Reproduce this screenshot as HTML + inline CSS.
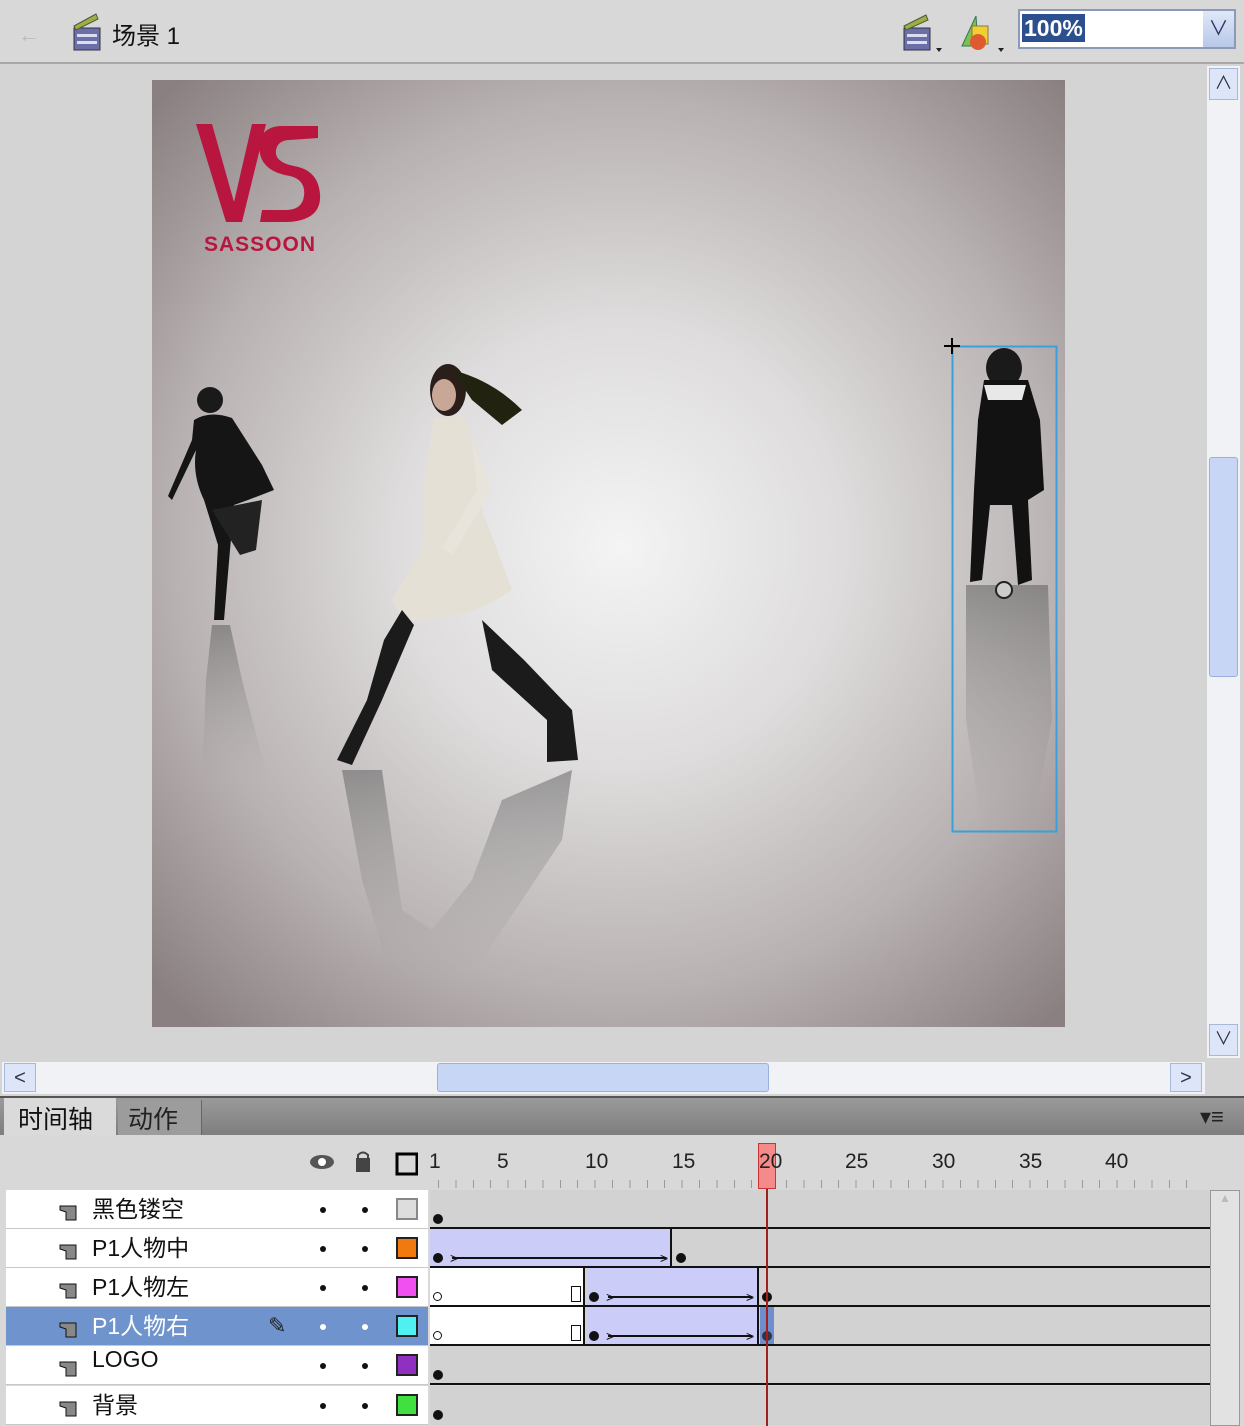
<!DOCTYPE html>
<html><head><meta charset="utf-8"><style>
*{margin:0;padding:0;box-sizing:border-box}
body{width:1244px;height:1426px;overflow:hidden;background:#d4d4d4;font-family:"Liberation Sans","Noto Sans CJK SC",sans-serif;position:relative}
.abs{position:absolute}
.row{position:absolute;left:6px;width:422px;height:39px;background:#fff;border-bottom:1px solid #c8c8c8}
.row .nm{position:absolute;left:86px;top:0px;font-size:23px;color:#111}
.row .ic{position:absolute;left:52px;top:12px;width:20px;height:20px}
.row .d1,.row .d2{position:absolute;top:17px;width:6px;height:6px;border-radius:50%;background:#111}
.row .d1{left:314px}.row .d2{left:356px}
.row .sw{position:absolute;left:390px;top:8px;width:22px;height:22px;border:2px solid #222}
.tl{position:absolute;left:430px;width:780px;height:39px;border-bottom:2px solid #111;background:#d2d2d2}
.kf{position:absolute;width:10px;height:10px;border-radius:50%;background:#111}
.ar{position:absolute;top:23px;font-size:14px;line-height:12px;color:#111}
</style></head><body>
<div class="abs" style="left:0;top:0;width:1244px;height:64px;background:#d8d8d8;border-bottom:2px solid #a8a8a8"></div>
<div class="abs" style="left:18px;top:22px;color:#bbb;font-size:22px">&#x2190;</div>
<svg class="abs" style="left:70px;top:12px" width="36" height="40"><rect x="4" y="16" width="26" height="22" fill="#6a6fa8" stroke="#334" /><rect x="7" y="22" width="20" height="3" fill="#dde"/><rect x="7" y="29" width="20" height="3" fill="#dde"/><path d="M4 14 L26 2 L28 7 L6 18Z" fill="#9ab040" stroke="#554"/></svg>
<div class="abs" style="left:112px;top:16px;font-size:24px;color:#111">场景 1</div>
<svg class="abs" style="left:900px;top:14px" width="48" height="40"><rect x="4" y="14" width="26" height="22" fill="#6a6fa8" stroke="#334"/><rect x="7" y="20" width="20" height="3" fill="#dde"/><rect x="7" y="27" width="20" height="3" fill="#dde"/><path d="M4 12 L26 1 L28 6 L6 16Z" fill="#9ab040" stroke="#554"/><path d="M36 34 L42 34 L39 38Z" fill="#222"/></svg>
<svg class="abs" style="left:958px;top:12px" width="50" height="42"><path d="M4 34 L18 4 L20 34Z" fill="#7ec050" stroke="#375"/><rect x="14" y="14" width="16" height="18" fill="#f0d030" stroke="#874"/><circle cx="20" cy="30" r="8" fill="#e05a30"/><path d="M40 36 L46 36 L43 40Z" fill="#222"/></svg>
<div class="abs" style="left:1018px;top:9px;width:218px;height:40px;background:#fff;border:2px solid #8a9ab8"></div>
<div class="abs" style="left:1022px;top:14px;height:28px;padding:0 2px;background:#2b4f8f;color:#fff;font-size:23px;font-weight:bold;line-height:28px">100%</div>
<div class="abs" style="left:1203px;top:11px;width:31px;height:36px;background:linear-gradient(#dfe8f8,#b8c8e8);color:#336;text-align:center;font-size:20px;line-height:36px">&#x2228;</div>
<div class="abs" style="left:152px;top:80px;width:913px;height:947px;background:radial-gradient(ellipse 640px 640px at 468px 465px,#f4f4f4 0%,#dedcdc 35%,#b8b1b1 70%,#8a8081 100%)"></div>
<svg class="abs" style="left:190px;top:118px" width="140" height="140">
<path d="M6 6 L22 6 L44 84 L62 6 L76 6 L52 104 L36 104Z" fill="#b8163f"/>
<path d="M128 8 L90 8 Q66 10 70 36 Q74 54 100 58 Q116 62 114 78 Q112 92 96 92 L72 92 L70 104 L98 104 Q132 102 130 76 Q128 52 104 48 Q84 44 86 32 Q88 22 100 22 L128 20Z" fill="#b8163f"/>
<text x="14" y="133" font-family="Liberation Sans" font-weight="bold" font-size="21" fill="#b8163f" letter-spacing="1">SASSOON</text>
</svg>
<svg class="abs" style="left:152px;top:80px" width="913" height="980">
<defs><linearGradient id="rf" x1="0" y1="0" x2="0" y2="1"><stop offset="0" stop-color="#555" stop-opacity=".5"/><stop offset="1" stop-color="#999" stop-opacity="0"/></linearGradient></defs>
<circle cx="58" cy="320" r="13" fill="#1a1a1a"/>
<path d="M42 340 Q58 330 80 338 L110 385 L122 410 L96 420 L82 425 L78 470 L72 540 L62 540 L66 465 L52 420 Q40 395 44 370 L20 420 L16 416 L40 360Z" fill="#151515"/>
<path d="M60 430 L110 420 L104 470 L88 475Z" fill="#222"/>
<path d="M60 545 L78 545 L90 600 L116 700 L50 700 L54 600Z" fill="url(#rf)"/>
<ellipse cx="296" cy="310" rx="18" ry="26" fill="#2a1e1a"/>
<path d="M300 290 Q340 300 370 330 L350 345 L320 320Z" fill="#221"/>
<ellipse cx="292" cy="315" rx="12" ry="16" fill="#c9a797"/>
<path d="M282 338 L312 336 L325 370 L330 430 L360 510 Q310 545 250 540 L240 520 L270 470 L272 400Z" fill="#e4e0d6"/>
<path d="M320 360 L340 410 L300 475 L290 468 L325 410Z" fill="#e8e4dc"/>
<path d="M250 530 L232 560 L215 620 L185 680 L200 685 L230 620 L262 545Z" fill="#1b1b1b"/>
<path d="M330 540 L372 580 L420 630 L426 680 L395 682 L395 640 L340 590Z" fill="#1b1b1b"/>
<path d="M190 690 L230 690 L250 830 L280 850 L320 800 L350 720 L420 690 L410 760 L330 880 L290 900 L240 900 L210 800Z" fill="url(#rf)"/>
<ellipse cx="852" cy="288" rx="18" ry="20" fill="#1a1a1a"/>
<path d="M832 300 L876 300 L888 340 L892 410 L876 420 L880 500 L866 505 L860 425 L838 425 L830 500 L818 502 L822 410 L826 340Z" fill="#121212"/>
<path d="M832 305 L874 305 L870 320 L836 320Z" fill="#e8e8e8"/>
<path d="M814 505 L896 505 L900 640 L880 750 L830 750 L814 640Z" fill="url(#rf)"/>
<rect x="800.5" y="266.5" width="104" height="485" fill="none" stroke="#3aa0dd" stroke-width="2"/>
<path d="M800 258 V274 M792 266 H808" stroke="#000" stroke-width="2"/>
<circle cx="852" cy="510" r="8" fill="#ccc" stroke="#222" stroke-width="2"/>
</svg>
<div class="abs" style="left:1207px;top:66px;width:33px;height:992px;background:#f0f2f6"></div>
<div class="abs" style="left:1209px;top:68px;width:29px;height:32px;background:#dce6f8;border:1px solid #a8b8d8;color:#334;text-align:center;font-size:18px">&#x2227;</div>
<div class="abs" style="left:1209px;top:457px;width:29px;height:220px;background:#c6d6f4;border:1px solid #9cb0dc;border-radius:3px"></div>
<div class="abs" style="left:1209px;top:1024px;width:29px;height:32px;background:#dce6f8;border:1px solid #a8b8d8;color:#334;text-align:center;font-size:18px">&#x2228;</div>
<div class="abs" style="left:2px;top:1062px;width:1203px;height:32px;background:#f0f2f6"></div>
<div class="abs" style="left:4px;top:1063px;width:32px;height:29px;background:#dce6f8;border:1px solid #a8b8d8;color:#334;text-align:center;font-size:20px;line-height:28px">&lt;</div>
<div class="abs" style="left:437px;top:1063px;width:332px;height:29px;background:#c6d6f4;border:1px solid #9cb0dc;border-radius:3px"></div>
<div class="abs" style="left:1170px;top:1063px;width:32px;height:29px;background:#dce6f8;border:1px solid #a8b8d8;color:#334;text-align:center;font-size:20px;line-height:28px">&gt;</div>
<div class="abs" style="left:0;top:1096px;width:1244px;height:330px;background:#d8d8d8;border-top:2px solid #555"></div>
<div class="abs" style="left:0;top:1098px;width:1244px;height:37px;background:linear-gradient(#9a9a9a,#7e7e7e)"></div>
<div class="abs" style="left:4px;top:1098px;width:112px;height:37px;background:#dadada;font-size:25px;padding:2px 0 0 14px;color:#111">时间轴</div>
<div class="abs" style="left:118px;top:1100px;width:84px;height:35px;background:#9c9c9c;font-size:25px;padding:0 0 0 10px;color:#222;border-right:1px solid #666">动作</div>
<div class="abs" style="left:1200px;top:1104px;font-size:22px;color:#222">&#x25BE;&#x2261;</div>
<svg class="abs" style="left:308px;top:1150px" width="110" height="28"><ellipse cx="14" cy="12" rx="12" ry="7" fill="#555"/><circle cx="14" cy="12" r="4" fill="#fff"/><rect x="48" y="8" width="14" height="14" fill="#444"/><path d="M50 9 V5 Q55 0 60 5 V9" fill="none" stroke="#444" stroke-width="2"/><rect x="89" y="4" width="20" height="20" fill="none" stroke="#000" stroke-width="3"/></svg>
<div class="abs" style="left:0;top:1150px;font-size:21px;color:#222;width:1244px">
<span class="abs" style="left:429px">1</span><span class="abs" style="left:497px">5</span><span class="abs" style="left:585px">10</span><span class="abs" style="left:672px">15</span><span class="abs" style="left:845px">25</span><span class="abs" style="left:932px">30</span><span class="abs" style="left:1019px">35</span><span class="abs" style="left:1105px">40</span></div>
<div class="abs" style="left:430px;top:1180px;width:770px;height:8px;background:repeating-linear-gradient(90deg,transparent 0 8px,#999 8px 9px,transparent 9px 17.4px)"></div>
<div class="row" style="top:1190px"><svg class="ic" viewBox="0 0 20 20"><path d="M2 4 L18 4 L18 18 L8 18 L8 10 L2 8Z" fill="#888" stroke="#111"/></svg><span class="nm">黑色镂空</span><i class="d1"></i><i class="d2"></i><i class="sw" style="background:#ddd;border-color:#888"></i></div>
<div class="row" style="top:1229px"><svg class="ic" viewBox="0 0 20 20"><path d="M2 4 L18 4 L18 18 L8 18 L8 10 L2 8Z" fill="#888" stroke="#111"/></svg><span class="nm">P1人物中</span><i class="d1"></i><i class="d2"></i><i class="sw" style="background:#f07a10"></i></div>
<div class="row" style="top:1268px"><svg class="ic" viewBox="0 0 20 20"><path d="M2 4 L18 4 L18 18 L8 18 L8 10 L2 8Z" fill="#888" stroke="#111"/></svg><span class="nm">P1人物左</span><i class="d1"></i><i class="d2"></i><i class="sw" style="background:#f050f0"></i></div>
<div class="row" style="top:1307px;background:#6f93cc"><svg class="ic" viewBox="0 0 20 20"><path d="M2 4 L18 4 L18 18 L8 18 L8 10 L2 8Z" fill="#888" stroke="#111"/></svg><span class="nm" style="color:#fff">P1人物右</span><span class="abs" style="left:262px;top:6px;font-size:22px;color:#222">&#x270E;</span><i class="d1" style="background:#fff"></i><i class="d2" style="background:#fff"></i><i class="sw" style="background:#50f0f0"></i></div>
<div class="row" style="top:1346px"><svg class="ic" viewBox="0 0 20 20"><path d="M2 4 L18 4 L18 18 L8 18 L8 10 L2 8Z" fill="#888" stroke="#111"/></svg><span class="nm">LOGO</span><i class="d1"></i><i class="d2"></i><i class="sw" style="background:#9030c0"></i></div>
<div class="row" style="top:1386px"><svg class="ic" viewBox="0 0 20 20"><path d="M2 4 L18 4 L18 18 L8 18 L8 10 L2 8Z" fill="#888" stroke="#111"/></svg><span class="nm">背景</span><i class="d1"></i><i class="d2"></i><i class="sw" style="background:#40e040"></i></div>
<div class="tl" style="top:1190px"><i class="kf" style="left:3px;top:24px"></i></div>
<div class="tl" style="top:1229px"><div class="abs" style="left:0;top:0;width:242px;height:37px;background:#ccccf8;border-right:2px solid #111"></div><i class="kf" style="left:3px;top:24px"></i><span class="ar" style="left:20px">&gt;</span><div class="abs" style="left:22px;top:28px;width:214px;height:2px;background:#111"></div><span class="ar" style="left:230px">&gt;</span><i class="kf" style="left:246px;top:24px"></i></div>
<div class="tl" style="top:1268px"><div class="abs" style="left:0;top:0;width:155px;height:37px;background:#fff;border-right:2px solid #111"></div><div class="abs" style="left:157px;top:0;width:172px;height:37px;background:#ccccf8;border-right:2px solid #111"></div><i class="abs" style="left:3px;top:24px;width:9px;height:9px;border:1.5px solid #111;border-radius:50%"></i><i class="abs" style="left:141px;top:18px;width:10px;height:16px;border:1.5px solid #111"></i><i class="kf" style="left:159px;top:24px"></i><span class="ar" style="left:176px">&gt;</span><div class="abs" style="left:178px;top:28px;width:144px;height:2px;background:#111"></div><span class="ar" style="left:316px">&gt;</span><i class="kf" style="left:332px;top:24px"></i></div>
<div class="tl" style="top:1307px"><div class="abs" style="left:0;top:0;width:155px;height:37px;background:#fff;border-right:2px solid #111"></div><div class="abs" style="left:157px;top:0;width:172px;height:37px;background:#ccccf8;border-right:2px solid #111"></div><div class="abs" style="left:330px;top:0;width:14px;height:37px;background:#6f8fcc"></div><i class="abs" style="left:3px;top:24px;width:9px;height:9px;border:1.5px solid #111;border-radius:50%"></i><i class="abs" style="left:141px;top:18px;width:10px;height:16px;border:1.5px solid #111"></i><i class="kf" style="left:159px;top:24px"></i><span class="ar" style="left:176px">&gt;</span><div class="abs" style="left:178px;top:28px;width:144px;height:2px;background:#111"></div><span class="ar" style="left:316px">&gt;</span><i class="kf" style="left:332px;top:24px;background:#334"></i></div>
<div class="tl" style="top:1346px"><i class="kf" style="left:3px;top:24px"></i></div>
<div class="tl" style="top:1386px;border-bottom:none"><i class="kf" style="left:3px;top:24px"></i></div>
<div class="abs" style="left:1210px;top:1190px;width:30px;height:236px;background:#e2e2e2;border:1px solid #999;color:#bbb;text-align:center;font-size:12px">&#x25B2;</div>
<div class="abs" style="left:758px;top:1143px;width:18px;height:46px;background:#f58a8a;border:1px solid #c33;font-size:21px;line-height:36px;color:#222;text-align:center">20</div>
<div class="abs" style="left:766px;top:1189px;width:2px;height:237px;background:#a02020"></div>
</body></html>
